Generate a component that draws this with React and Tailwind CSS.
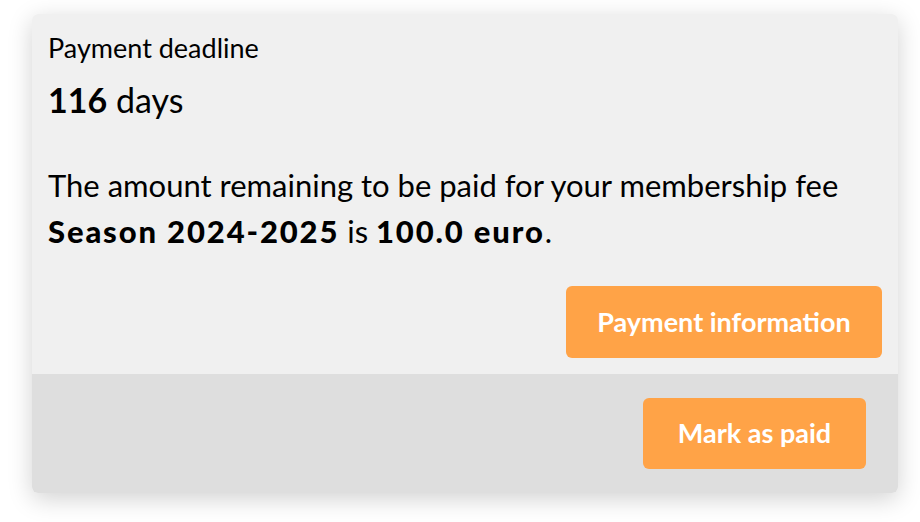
export default function App() {
  return (
    <div className="min-h-screen bg-white pl-8 pr-[22px] pt-[14px] font-['Lato',sans-serif] text-black">
      <div className="rounded-md overflow-hidden shadow-[0_6px_24px_rgba(0,0,0,0.18)]">
        {/* deadline + amount */}
        <div className="bg-[#f0f0f0] px-4 pt-[19px] pb-4">
          <div className="text-[27px] leading-[30px]">Payment deadline</div>
          <div className="text-[34px] leading-[42px] mt-[16px]">
            <span className="font-bold">116</span> days
          </div>
          <p className="text-[31px] leading-[46px] mt-[41px]">
            The amount remaining to be paid for your membership fee
            <br />
            <span className="font-black tracking-[0.06em]">Season 2024-2025</span> is{" "}
            <span className="font-black tracking-[0.06em]">100.0 euro</span>.
          </p>
          <div className="flex justify-end mt-[32px]">
            <button className="h-[72px] w-[316px] rounded-md bg-[#ffa347] text-white text-[27px] font-bold">
              Payment information
            </button>
          </div>
        </div>
        {/* actions */}
        <div className="bg-[#dedede] flex justify-end px-8 py-6">
          <button className="h-[71px] w-[223px] rounded-md bg-[#ffa347] text-white text-[27px] font-bold">
            Mark as paid
          </button>
        </div>
      </div>
    </div>
  );
}
